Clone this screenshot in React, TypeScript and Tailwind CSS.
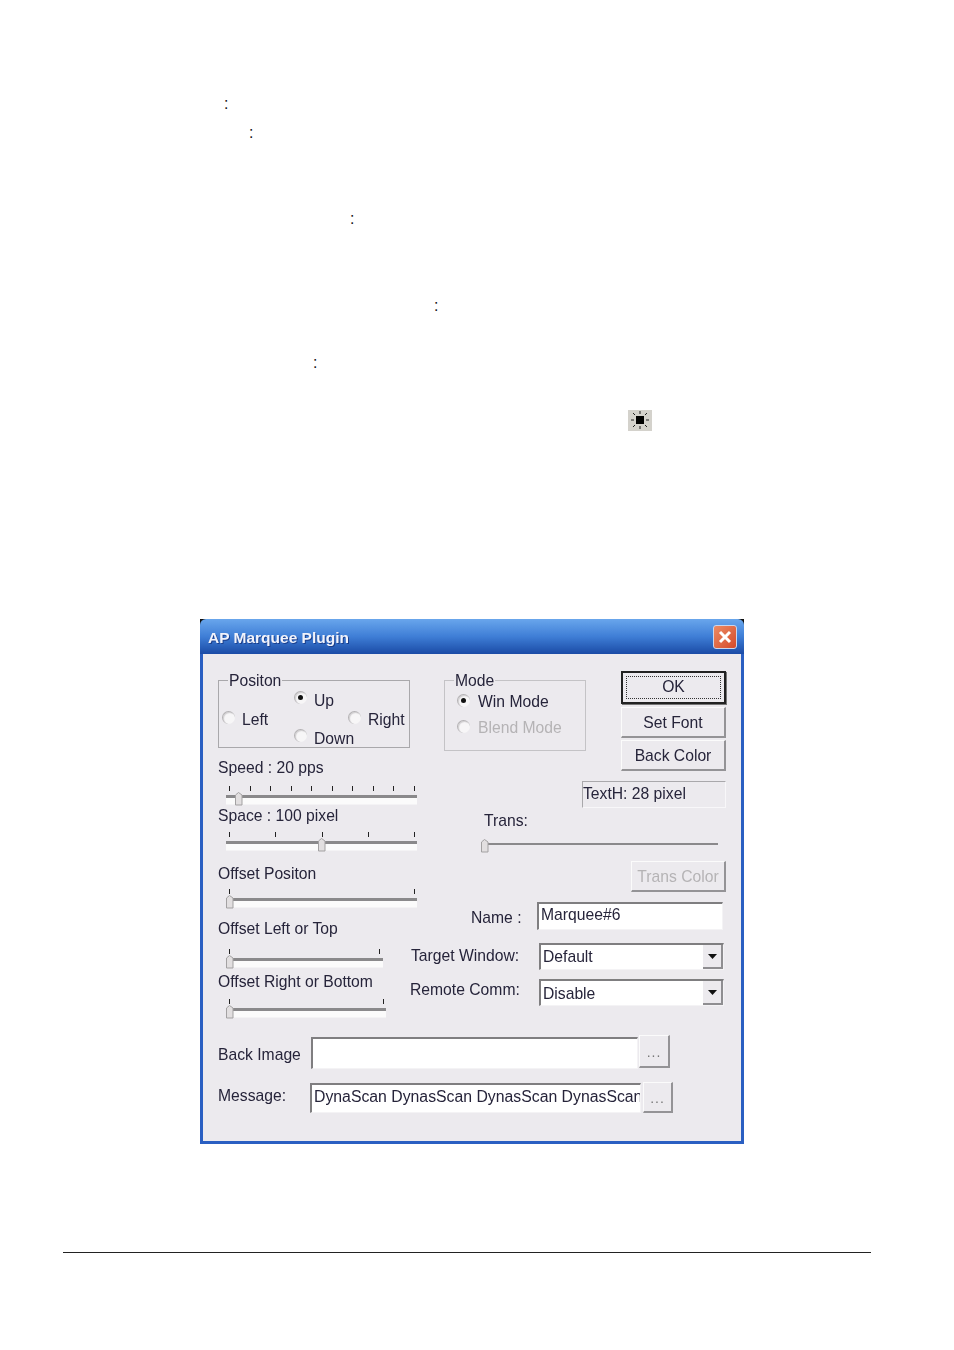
import React from 'react';

// Win32-style dialog pasted in a document page
const Radio: React.FC<{ checked?: boolean; disabled?: boolean; className?: string }> = ({ checked, disabled, className }) => (
    <span className={`relative inline-block w-[13px] h-[13px] shrink-0 rounded-full bg-[#f7f6f7] border-t border-l border-[#b3b1b3] shadow-[inset_1px_1px_1px_#d0ced0] ${className ?? ''}`}>
        {checked && <span className={`absolute left-[3px] top-[3px] w-[5px] h-[5px] rounded-full ${disabled ? 'bg-[#999]' : 'bg-[#111]'}`} />}
    </span>
);

const RadioItem: React.FC<{ label: string; checked?: boolean; disabled?: boolean; className?: string; radioClass?: string }> = ({ label, checked, disabled, className, radioClass }) => (
    <div className={`flex items-center ${className ?? ''}`}>
        <Radio checked={checked} disabled={disabled} className={radioClass} />
        <span className={`ml-[7px] ${disabled ? 'text-[#b5b3b5]' : ''}`}>{label}</span>
    </div>
);

const Legend: React.FC<{ label: string; left: number }> = ({ label, left }) => (
    <span className="absolute top-[-10px] h-[20px] leading-[20px] px-[1px] bg-[#eceaee]" style={{ left }}>
        {label}
    </span>
);

const Thumb: React.FC<{ x: number; top: number }> = ({ x, top }) => (
    <svg className="absolute" style={{ left: x, top }} width="8" height="14" viewBox="0 0 8 14">
        <path d="M0.500 13V3L3.500 0.500L7 3V13Z" fill="#e2dfe0" stroke="#a3a1a2" strokeWidth="1" />
    </svg>
);

const Slider: React.FC<{ width: number; ticks?: number; thumb: number; tickEnd?: number; className?: string }> = ({ width, ticks = 2, thumb, tickEnd = 2, className }) => (
    <div className={`relative ml-[8px] h-[20px] ${className ?? ''}`} style={{ width }}>
        <div className="flex justify-between h-[5px] pl-[3px]" style={{ paddingRight: tickEnd }}>
            {Array.from({ length: ticks }).map((_, i) => (
                <span key={i} className="w-[1px] h-[5px] bg-[#222]" />
            ))}
        </div>
        <div className="mt-[4px] h-[9px] border-t-[3px] border-[#8a898b] bg-[#fbfbfb] shadow-[0_1px_0_#f4f3f5]" />
        <Thumb x={thumb} top={6} />
    </div>
);

const Button: React.FC<{ label: string; className?: string; disabled?: boolean }> = ({ label, className, disabled }) => (
    <div className={`flex items-center justify-center pt-[2px] border-t border-l border-t-[#fbfbfb] border-l-[#fbfbfb] border-b-2 border-r-2 border-b-[#949396] border-r-[#949396] bg-[#eceaee] ${disabled ? 'text-[#b5b3b5]' : ''} ${className ?? ''}`}>
        {label}
    </div>
);

const Sunken: React.FC<{ className?: string; children?: React.ReactNode }> = ({ className, children }) => (
    <div className={`bg-white border-t-2 border-l-2 border-t-[#7f7e80] border-l-[#7f7e80] border-b border-r border-b-[#f4f3f5] border-r-[#f4f3f5] overflow-hidden whitespace-nowrap ${className ?? ''}`}>
        {children}
    </div>
);

const Combo: React.FC<{ value: string; textClass?: string }> = ({ value, textClass }) => (
    <Sunken className="w-[185px] h-[27px] flex items-center justify-between pl-[2px]">
        <span className={textClass}>{value}</span>
        <span className="w-[20px] h-[24px] flex items-center justify-center bg-[#eceaee] border-r-2 border-b-2 border-[#8f8e91]">
            <svg width="9" height="5" viewBox="0 0 9 5"><path d="M0 0H9L4.500 5Z" fill="#111" /></svg>
        </span>
    </Sunken>
);

const App: React.FC = () => {
    return (
        <div className="w-[954px] h-[1350px] bg-white overflow-hidden font-['Liberation_Sans',Arial,sans-serif] text-[15.7px] leading-[20px] text-[#26243a]">
            {/* Colons left over from the page text */}
            <div className="h-[20px] mt-[94px] pl-[224px] text-[#111]">:</div>
            <div className="h-[20px] mt-[9px] pl-[249px] text-[#111]">:</div>
            <div className="h-[20px] mt-[66px] pl-[350px] text-[#111]">:</div>
            <div className="h-[20px] mt-[67px] pl-[434px] text-[#111]">:</div>
            <div className="h-[20px] mt-[37px] pl-[313px] text-[#111]">:</div>

            {/* Brightness toolbar icon */}
            <div className="mt-[37px] ml-[628px] w-[24px] h-[21px] bg-[#d4d2cc] flex items-center justify-center">
                <svg width="20" height="19" viewBox="0 0 20 19">
                    <rect x="6" y="5" width="8" height="8" fill="#000" />
                    <path d="M10 0V3M10 15V18M1 9H4M16 9H19M3 2L5 4M17 2L15 4M3 16L5 14M17 16L15 14" stroke="#222" strokeWidth="1" fill="none" />
                </svg>
            </div>

            {/* Dialog */}
            <div className="mt-[188px] ml-[200px] w-[544px] h-[525px] flex flex-col bg-[linear-gradient(#111_6px,#2a5fc2_6px)] overflow-hidden blur-[0.35px]">
                <div className="h-[35px] shrink-0 flex items-center justify-between pl-[8px] pr-[7px] rounded-t-[6px] bg-gradient-to-b from-[#69a6ec] via-[#3f7ed6] to-[#1b4ba6]">
                    <span className="pt-[3px] text-[#f1f3fb] font-bold text-[15.5px] [text-shadow:1px_1px_0_#1b3f8c]">AP Marquee Plugin</span>
                    <span className="w-[24px] h-[24px] flex items-center justify-center rounded-[3px] border border-[#c9d6ee] bg-gradient-to-br from-[#ec8a63] to-[#d4492a]">
                        <svg width="14" height="14" viewBox="0 0 14 14"><path d="M2 2L12 12M12 2L2 12" stroke="#fff" strokeWidth="3" /></svg>
                    </span>
                </div>

                <div className="flex-1 mx-[3px] mb-[3px] bg-[#eceaee] pl-[15px] pt-[17px]">
                    <div className="flex items-start h-[364px]">
                        {/* Left column */}
                        <div className="w-[192px] shrink-0">
                            <div className="relative mt-[9px] h-[68px] border border-[#a9a8ab] pt-[10px]">
                                <Legend label="Positon" left={9} />
                                <RadioItem label="Up" checked className="pl-[75px] h-[19px]" radioClass="-mt-[6px]" />
                                <div className="flex">
                                    <RadioItem label="Left" className="pl-[3px] w-[129px] h-[19px]" radioClass="-mt-[5px]" />
                                    <RadioItem label="Right" className="h-[19px]" radioClass="-mt-[5px]" />
                                </div>
                                <RadioItem label="Down" className="pl-[75px] h-[19px]" radioClass="-mt-[6px]" />
                            </div>
                            <div className="mt-[10px] h-[20px]">Speed : 20 pps</div>
                            <Slider width={191} ticks={10} thumb={9} className="mt-[8px]" />
                            <div className="h-[20px]">Space : 100 pixel</div>
                            <Slider width={191} ticks={5} thumb={92} className="mt-[6px]" />
                            <div className="mt-[12px] h-[20px]">Offset Positon</div>
                            <Slider width={191} thumb={0} className="mt-[5px]" />
                            <div className="mt-[10px] h-[20px]">Offset Left or Top</div>
                            <Slider width={157} thumb={0} tickEnd={3} className="mt-[10px]" />
                            <div className="mt-[3px] h-[20px]">Offset Right or Bottom</div>
                            <Slider width={160} thumb={0} className="mt-[7px]" />
                        </div>

                        {/* Right column */}
                        <div className="w-[316px] shrink-0 flex flex-col">
                            <div className="flex items-start h-[100px]">
                                <div className="relative ml-[34px] mt-[9px] w-[142px] h-[71px] border border-[#c4c3c6] pl-[12px] pt-[11px]">
                                    <Legend label="Mode" left={9} />
                                    <RadioItem label="Win Mode" checked className="h-[20px] [&>span:last-child]:ml-[8px]" radioClass="-mt-[3px]" />
                                    <RadioItem label="Blend Mode" disabled className="mt-[6px] h-[20px] [&>span:last-child]:ml-[8px]" radioClass="-mt-[3px]" />
                                </div>
                                <div className="ml-[35px] w-[105px] flex flex-col">
                                    <div className="h-[33px] border-2 border-[#222] bg-[#eceaee] p-[3px] shadow-[1px_1px_0_#777]">
                                        <div className="h-full pb-[2px] border border-dotted border-[#333] flex items-center justify-center">OK</div>
                                    </div>
                                    <Button label="Set Font" className="mt-[3px] h-[31px]" />
                                    <Button label="Back Color" className="mt-[2px] h-[31px]" />
                                </div>
                            </div>
                            <div className="mt-[10px] ml-[172px] w-[144px] h-[27px] leading-[24px] border-t border-l border-t-[#a9a8ab] border-l-[#a9a8ab] border-b border-r border-b-[#f8f7f9] border-r-[#f8f7f9]">
                                TextH: 28 pixel
                            </div>
                            <div className="mt-[3px] ml-[74px] h-[20px]">Trans:</div>
                            <div className="relative mt-[12px] ml-[72px] w-[236px] h-[2px] bg-[#8a898b]">
                                <Thumb x={-1} top={-4} />
                            </div>
                            <Button label="Trans Color" disabled className="mt-[16px] ml-[221px] w-[95px] h-[31px]" />
                            <div className="mt-[10px] flex items-center">
                                <span className="ml-[61px] w-[66px] mt-[4px]">Name :</span>
                                <Sunken className="w-[186px] h-[28px] pl-[2px] leading-[22px]">Marquee#6</Sunken>
                            </div>
                            <div className="mt-[13px] flex items-center">
                                <span className="ml-[1px] w-[128px] -mt-[1px]">Target Window:</span>
                                <Combo value="Default" />
                            </div>
                            <div className="mt-[9px] flex items-center">
                                <span className="w-[129px] -mt-[5px]">Remote Comm:</span>
                                <Combo value="Disable" textClass="pt-[2px]" />
                            </div>
                        </div>
                    </div>

                    {/* File rows */}
                    <div className="flex items-start">
                        <span className="w-[93px] mt-[10px]">Back Image</span>
                        <Sunken className="w-[327px] h-[32px] mt-[2px]" />
                        <Button label="..." className="ml-[1px] w-[31px] h-[33px] text-[#777] text-[14px] tracking-[1px]" />
                    </div>
                    <div className="flex items-start mt-[13px]">
                        <span className="w-[92px] mt-[4px]">Message:</span>
                        <Sunken className="w-[331px] h-[30px] mt-[1px] pl-[2px] leading-[24px] text-[15.8px]">DynaScan DynasScan DynasScan DynasScan</Sunken>
                        <Button label="..." className="ml-[2px] w-[30px] h-[31px] text-[#777] text-[14px] tracking-[1px]" />
                    </div>
                </div>
            </div>

            {/* Footer rule */}
            <div className="mt-[108px] ml-[63px] w-[808px] h-[1px] bg-[#222]" />
        </div>
    );
};

export default App;
